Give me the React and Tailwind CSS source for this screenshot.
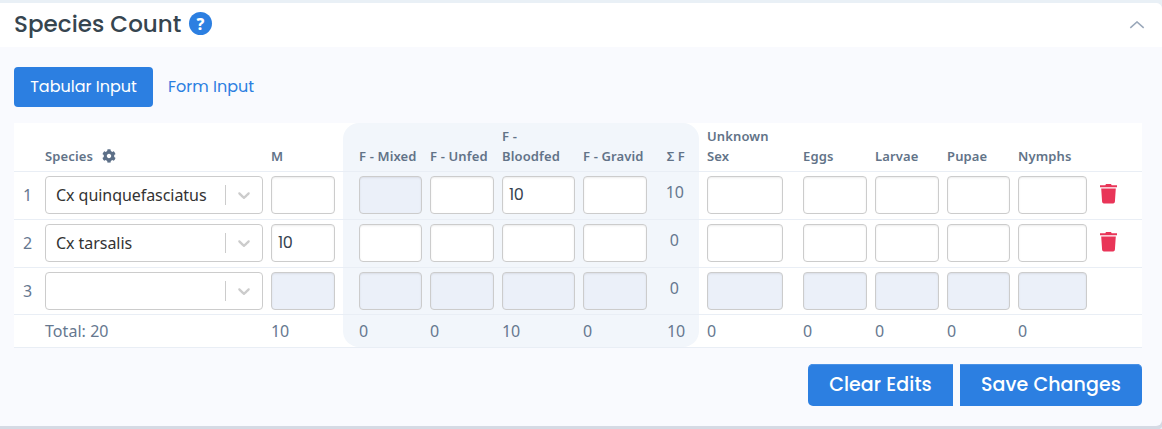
import React from "react";

const COLS =
  "grid grid-cols-[31px_226px_72px_87px_72px_81px_72px_44px_104px_72px_72px_71px_77px_47px]";

const GEO = "font-['Poppins','Inter',sans-serif] [font-feature-settings:'cv11']";

const columns = [
  { key: "m", label: "M", cell: "pr-2" },
  { key: "mixed", label: "F - Mixed", cell: "bg-[#f2f6fb] pl-4 pr-2", head: "rounded-tl-2xl", foot: "rounded-bl-2xl" },
  { key: "unfed", label: "F - Unfed", cell: "bg-[#f2f6fb] pr-2" },
  { key: "bloodfed", label: "F - Bloodfed", cell: "bg-[#f2f6fb] pr-2" },
  { key: "gravid", label: "F - Gravid", cell: "bg-[#f2f6fb] pr-2" },
  { key: "sum", label: "Σ F", cell: "bg-[#f2f6fb] pr-[14px] justify-end", head: "rounded-tr-2xl", foot: "rounded-br-2xl" },
  { key: "unknown", label: "Unknown Sex", cell: "pl-2 pr-5" },
  { key: "eggs", label: "Eggs", cell: "pr-2" },
  { key: "larvae", label: "Larvae", cell: "pr-2" },
  { key: "pupae", label: "Pupae", cell: "pr-2" },
  { key: "nymphs", label: "Nymphs", cell: "pr-2" },
];

const rows = [
  { species: "Cx quinquefasciatus", values: { bloodfed: "10" }, sum: "10", disabled: ["mixed"], removable: true },
  { species: "Cx tarsalis", values: { m: "10" }, sum: "0", disabled: [], removable: true },
  { species: "", values: {}, sum: "0", disabled: columns.map((c) => c.key), removable: false },
];

const totals = { m: "10", mixed: "0", unfed: "0", bloodfed: "10", gravid: "0", sum: "10", unknown: "0", eggs: "0", larvae: "0", pupae: "0", nymphs: "0" };

function Gear() {
  return (
    <svg className="ml-[9px] size-[14px]" viewBox="0 0 512 512" fill="#5d7088">
      <path d="M487.4 315.7l-42.600-24.600c4.300-23.200 4.300-47 0-70.200l42.600-24.600c4.900-2.800 7.100-8.600 5.500-14-11.100-35.600-30-67.800-54.700-94.600-3.800-4.100-10-5.100-14.800-2.300L380.800 110c-17.900-15.400-38.500-27.300-60.800-35.100V25.800c0-5.600-3.900-10.500-9.400-11.700-36.700-8.200-74.300-7.800-109.200 0-5.500 1.200-9.400 6.100-9.400 11.700V75c-22.200 7.900-42.800 19.800-60.800 35.100L88.700 85.500c-4.900-2.800-11-1.900-14.800 2.300-24.700 26.700-43.600 58.900-54.700 94.600-1.700 5.400.6 11.200 5.500 14L67.300 221c-4.300 23.200-4.300 47 0 70.200l-42.600 24.600c-4.900 2.800-7.100 8.600-5.500 14 11.100 35.600 30 67.800 54.700 94.600 3.800 4.100 10 5.100 14.800 2.300l42.600-24.600c17.900 15.400 38.500 27.300 60.800 35.100v49.200c0 5.600 3.900 10.500 9.400 11.700 36.700 8.200 74.300 7.800 109.200 0 5.500-1.200 9.400-6.100 9.400-11.700v-49.200c22.200-7.900 42.800-19.800 60.800-35.100l42.600 24.600c4.900 2.800 11 1.900 14.800-2.300 24.700-26.700 43.600-58.900 54.700-94.600 1.500-5.500-.7-11.300-5.600-14.100zM256 336c-44.100 0-80-35.900-80-80s35.900-80 80-80 80 35.900 80 80-35.900 80-80 80z" />
    </svg>
  );
}

function Trash() {
  return (
    <svg className="ml-[5px] mt-3 h-5 w-[17px]" viewBox="0 0 17 20" fill="#e93558">
      <path d="M0 1.300h5.300L6 0h5l.7 1.300H17v2H0z" />
      <path d="M1.200 4.600h14.600l-.9 13.200q-.1 1.700-1.800 1.700H3.900q-1.700 0-1.800-1.700z" />
    </svg>
  );
}

function SpeciesSelect({ value }) {
  return (
    <div className="flex h-[38px] w-[218px] items-center rounded-[4px] border border-[#cccccc] bg-white">
      <span className="grow pl-[10px] text-[16px] tracking-[-0.05px] text-[#333333]">{value}</span>
      <span className="h-5 w-px bg-[#cccccc]" />
      <span className="flex w-9 justify-center">
        <svg className="size-5" viewBox="0 0 20 20" fill="#cccccc">
          <path d="M4.516 7.548c0.436-0.446 1.043-0.481 1.576 0l3.908 3.747 3.908-3.747c0.533-0.481 1.141-0.446 1.574 0 0.436 0.445 0.408 1.197 0 1.615-0.406 0.418-4.695 4.502-4.695 4.502-0.217 0.223-0.502 0.335-0.787 0.335s-0.570-0.112-0.789-0.335c0 0-4.287-4.084-4.695-4.502s-0.436-1.170 0-1.615z" />
        </svg>
      </span>
    </div>
  );
}

function CountBox({ value, disabled }) {
  return (
    <div
      className={`flex h-[38px] w-full items-center rounded-[4px] border border-[#cccccc] pl-[6px] text-[16px] tracking-[-0.3px] text-[#36424f] shadow-[inset_0_1px_2px_rgba(0,0,0,0.08)] ${GEO} ${
        disabled ? "bg-[#ebf0f9]" : "bg-white"
      }`}
    >
      {value}
    </div>
  );
}

export default function App() {
  return (
    <div className="h-[429px] w-[1162px] overflow-hidden bg-[#e9f0f6] pt-[3px] font-['Noto_Sans',sans-serif] text-[#66788f]">
      <section className="h-[423px] overflow-hidden rounded-r-[6px] bg-[#f9fafe] shadow-[0_3px_0_1px_#d5dae4]">
        <header className="flex h-11 items-center bg-white pl-[14px] pr-[17px]">
          <h2 className={`relative -top-px w-[175px] whitespace-nowrap text-[23px] font-medium tracking-[0.04px] text-[#36454f] ${GEO}`}>Species Count</h2>
          <span className={`mb-[3px] flex size-[23px] items-center justify-center rounded-full bg-[#2c7fe1] text-[16px] font-extrabold text-white`}>?</span>
          <svg className="ml-auto h-[9px] w-4" viewBox="0 0 16 9" fill="none" stroke="#9aa8ba" strokeWidth="1.500">
            <path d="M1.300 6.900L8 .9l6.700 6" />
          </svg>
        </header>

        <nav className={`flex pl-[14px] pt-5 text-[16px] ${GEO}`}>
          <button className="h-10 w-[139px] whitespace-nowrap rounded-[4px] bg-[#2c7fe1] text-white">Tabular Input</button>
          <button className="h-10 whitespace-nowrap pl-[15px] text-[#2c7fe1]">Form Input</button>
        </nav>

        <div className="ml-[14px] mt-4 w-[1128px] bg-white">
          <div className={`${COLS} h-[49px] border-b border-[#e9eef5] text-[13px] font-semibold leading-5 tracking-[0.13px] text-[#627388]`}>
            <div />
            <div className="flex items-end pb-[5px]">
              <span>Species</span>
              <span className="flex h-5 items-center"><Gear /></span>
            </div>
            {columns.map((c) => (
              <div key={c.key} className={`flex items-end whitespace-normal pb-[5px] ${c.cell} ${c.head || ""}`}>
                <span className={c.label.length < 11 ? "whitespace-nowrap" : "w-16"}>{c.label}</span>
              </div>
            ))}
            <div />
          </div>

          {rows.map((r, i) => (
            <div key={i} className={`${COLS} ${i === 2 ? "h-[47px]" : "h-12"} border-b border-[#e9eef5] text-[16px]`}>
              <div className="pl-[9px] pt-[11px]">{i + 1}</div>
              <div className="pt-1"><SpeciesSelect value={r.species} /></div>
              {columns.map((c) => (
                <div key={c.key} className={`flex pt-1 ${c.cell} ${c.key === "sum" && r.sum === "0" ? "pr-[20px]" : ""}`}>
                  {c.key === "sum" ? (
                    <span className={`pt-1 ${r.sum === "10" ? "pr-px" : ""}`}>{r.sum}</span>
                  ) : (
                    <CountBox value={r.values[c.key]} disabled={r.disabled.includes(c.key)} />
                  )}
                </div>
              ))}
              <div>{r.removable && <Trash />}</div>
            </div>
          ))}

          <div className={`${COLS} h-[33px] border-b border-[#e9eef5] text-[16px] tracking-[-0.1px]`}>
            <div />
            <div className="pt-1 tracking-[0.05px]">Total: 20</div>
            {columns.map((c) => (
              <div key={c.key} className={`flex pt-1 ${c.cell} ${c.foot || ""}`}>{totals[c.key]}</div>
            ))}
            <div />
          </div>
        </div>

        <div className={`mr-5 mt-4 flex justify-end gap-[7px] text-[19px] font-medium tracking-[0.1px] text-white ${GEO}`}>
          <button className="h-[42px] w-[145px] whitespace-nowrap rounded-l-[5px] bg-[#2c7fe1] shadow-[inset_0_1px_0_#4a92e6]">Clear Edits</button>
          <button className="h-[42px] w-[182px] whitespace-nowrap rounded-r-[5px] bg-[#2c7fe1] shadow-[inset_0_1px_0_#4a92e6]">Save Changes</button>
        </div>
      </section>
    </div>
  );
}
